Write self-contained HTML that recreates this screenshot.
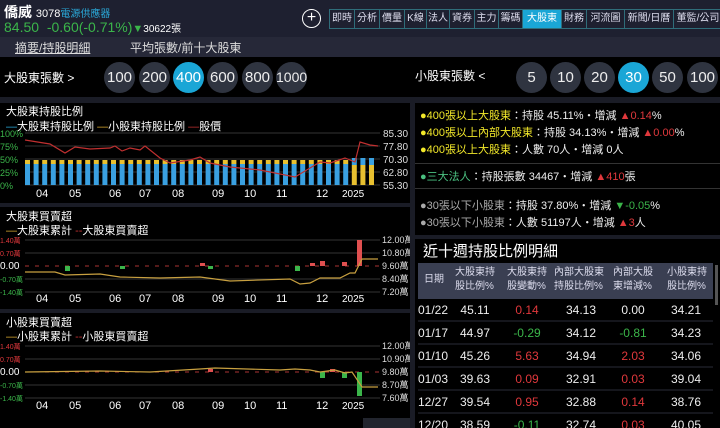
<!DOCTYPE html><html><head><meta charset="utf-8"><style>
*{margin:0;padding:0;box-sizing:border-box}
body{width:720px;height:428px;overflow:hidden;background:#000;font-family:"Liberation Sans","Noto Sans CJK TC",sans-serif;color:#fff;position:relative}
.a{position:absolute;white-space:nowrap}
.tab{position:absolute;top:9px;height:20px;border:1px solid #2f6d7a;font-size:10px;line-height:18px;text-align:center;color:#dde;background:#1e2030}
.c{position:absolute;width:31px;height:31px;border-radius:50%;background:#2f3440;font-size:15px;line-height:31px;text-align:center;color:#eee;top:62px}
.on{background:#1aa6d6;color:#fff}
.info{font-size:11px;color:#eee}
.y{color:#f2e82a}.r{color:#e0383c}.g{color:#3bb54a}.gr{color:#aaa}
</style></head><body>
<div class="a" style="left:0;top:0;width:720px;height:37px;background:#1e2030"></div>
<div class="a" style="left:4px;top:2px;font-size:14px;font-weight:bold">僑威 <span style="font-size:11px;font-weight:normal">3078</span><span style="font-size:10px;color:#2aa8d8;font-weight:normal">電源供應器</span></div>
<div class="a" style="left:4px;top:19px;font-size:14px;color:#3bb54a">84.50&nbsp; -0.60(-0.71%)<span style="font-size:11px">▼</span><span style="color:#fff;font-size:10px">30622張</span></div>
<div class="a" style="left:302px;top:9px;width:19px;height:19px;border:1.5px solid #fff;border-radius:50%;text-align:center;line-height:15px;font-size:16px">+</div>
<div class="tab" style="left:329px;width:26px">即時</div><div class="tab" style="left:354px;width:26px">分析</div><div class="tab" style="left:379px;width:26px">價量</div><div class="tab" style="left:404px;width:23px">K線</div><div class="tab" style="left:426px;width:24px">法人</div><div class="tab" style="left:449px;width:26px">資券</div><div class="tab" style="left:474px;width:25px">主力</div><div class="tab" style="left:498px;width:25px">籌碼</div><div class="tab" style="left:522px;width:40px;background:#1aa6d6;color:#fff">大股東</div><div class="tab" style="left:561px;width:26px">財務</div><div class="tab" style="left:586px;width:39px">河流圖</div><div class="tab" style="left:624px;width:50px">新聞/日曆</div><div class="tab" style="left:673px;width:50px">董監/公司</div>
<div class="a" style="left:0;top:37px;width:720px;height:20px;background:#262838"></div>
<div class="a" style="left:15px;top:39px;font-size:12px;color:#ddd;text-decoration:underline">摘要/持股明細</div>
<div class="a" style="left:130px;top:39px;font-size:12px;color:#ddd">平均張數/前十大股東</div>
<div class="a" style="left:4px;top:69px;font-size:12px">大股東張數 &gt;</div>
<div class="c" style="left:104px">100</div><div class="c" style="left:139px">200</div><div class="c on" style="left:173px">400</div><div class="c" style="left:207px">600</div><div class="c" style="left:242px">800</div><div class="c" style="left:276px;font-size:14px">1000</div>
<div class="a" style="left:415px;top:67px;font-size:12px">小股東張數 &lt;</div>
<div class="c" style="left:516px">5</div><div class="c" style="left:550px">10</div><div class="c" style="left:584px">20</div><div class="c on" style="left:618px">30</div><div class="c" style="left:652px">50</div><div class="c" style="left:687px">100</div>
<div class="a" style="left:0;top:97px;width:720px;height:6px;background:#1a1c26"></div>
<div class="a" style="left:410px;top:103px;width:5px;height:325px;background:#1a1c26"></div>
<div class="a" style="left:0;top:203px;width:410px;height:4px;background:#1a1c26"></div>
<div class="a" style="left:0;top:309px;width:410px;height:4px;background:#1a1c26"></div>
<div class="a" style="left:415px;top:235px;width:305px;height:4px;background:#1a1c26"></div>
<svg class="a" style="left:0;top:103px" width="410" height="325" font-family="Liberation Sans,Noto Sans CJK TC,sans-serif">
<text x="6" y="12" font-size="11" fill="#fff">大股東持股比例</text>
<text x="6" y="27" font-size="11" fill="#fff"><tspan fill="#2aa8d8">—</tspan>大股東持股比例 <tspan fill="#d8a830">—</tspan>小股東持股比例 <tspan fill="#c03030">—</tspan>股價</text>
<g stroke="#333" stroke-width="1"><line x1="25" y1="30" x2="380" y2="30"/><line x1="25" y1="43" x2="380" y2="43"/><line x1="25" y1="56" x2="380" y2="56"/><line x1="25" y1="69" x2="380" y2="69"/><line x1="25" y1="82" x2="380" y2="82"/></g>
<g font-size="9" fill="#3bb54a"><text x="0" y="34">100%</text><text x="0" y="47">75%</text><text x="0" y="60">50%</text><text x="0" y="73">25%</text><text x="0" y="86">0%</text></g>
<g font-size="10" fill="#ddd"><text x="383" y="34">85.30</text><text x="383" y="47">77.80</text><text x="383" y="60">70.30</text><text x="383" y="73">62.80</text><text x="383" y="86">55.30</text></g>
<g id="bars"></g>
<polyline fill="none" stroke="#c03030" stroke-width="1.2" points="25,37 50,41 65,50 75,44 90,46 110,45 115,43 122,48 130,45 140,47 145,43 160,55 170,60 190,57 200,54 210,60 230,64 260,67 295,74 310,65 320,59 330,60 345,55 355,59 360,39 370,42 378,43"/>
<g font-size="11" fill="#fff"><text x="36" y="94">04</text><text x="69" y="94">05</text><text x="109" y="94">06</text><text x="139" y="94">07</text><text x="172" y="94">08</text><text x="212" y="94">09</text><text x="244" y="94">10</text><text x="276" y="94">11</text><text x="316" y="94">12</text><text x="342" y="94" font-size="10">2025</text></g>

<text x="6" y="117" font-size="11" fill="#fff">大股東買賣超</text>
<text x="6" y="131" font-size="11" fill="#fff"><tspan fill="#d8a830">—</tspan>大股東累計 <tspan fill="#c03030">--</tspan>大股東買賣超</text>
<g stroke="#333"><line x1="25" y1="137" x2="380" y2="137"/><line x1="25" y1="150" x2="380" y2="150"/><line x1="25" y1="163" x2="380" y2="163" stroke-dasharray="4,6" stroke="#a33"/><line x1="25" y1="176" x2="380" y2="176"/><line x1="25" y1="189" x2="380" y2="189"/></g>
<g font-size="7"><text x="0" y="140" fill="#e0383c">1.40萬</text><text x="0" y="153" fill="#e0383c">0.70萬</text><text x="0" y="166" fill="#fff" font-size="10">0.00</text><text x="0" y="179" fill="#3bb54a">-0.70萬</text><text x="0" y="192" fill="#3bb54a">-1.40萬</text></g>
<g font-size="9" fill="#ddd"><text x="382" y="140">12.00萬</text><text x="382" y="153">10.80萬</text><text x="382" y="166">9.60萬</text><text x="382" y="179">8.40萬</text><text x="382" y="192">7.20萬</text></g>
<g fill="#3bb54a"><rect x="65" y="163" width="5" height="5"/><rect x="120" y="163" width="5" height="3"/><rect x="208" y="163" width="5" height="3"/><rect x="295" y="163" width="5" height="5"/></g>
<g fill="#e05050"><rect x="200" y="160" width="5" height="3"/><rect x="310" y="160" width="5" height="3"/><rect x="320" y="158" width="5" height="5"/><rect x="342" y="159" width="5" height="4"/><rect x="357" y="137" width="5" height="26"/></g>
<polyline fill="none" stroke="#c8a040" stroke-width="1.2" points="25,169 55,169 65,172 100,171 120,174 160,175 200,174 230,178 290,176 300,181 310,180 320,175 340,175 350,170 355,170 362,156 378,156"/>
<g font-size="11" fill="#fff"><text x="36" y="199">04</text><text x="69" y="199">05</text><text x="109" y="199">06</text><text x="139" y="199">07</text><text x="172" y="199">08</text><text x="212" y="199">09</text><text x="244" y="199">10</text><text x="276" y="199">11</text><text x="316" y="199">12</text><text x="342" y="199" font-size="10">2025</text></g>

<text x="6" y="223" font-size="11" fill="#fff">小股東買賣超</text>
<text x="6" y="237" font-size="11" fill="#fff"><tspan fill="#d8a830">—</tspan>小股東累計 <tspan fill="#c03030">--</tspan>小股東買賣超</text>
<g stroke="#333"><line x1="25" y1="243" x2="380" y2="243"/><line x1="25" y1="256" x2="380" y2="256"/><line x1="25" y1="269" x2="380" y2="269" stroke-dasharray="4,6" stroke="#a33"/><line x1="25" y1="282" x2="380" y2="282"/><line x1="25" y1="295" x2="380" y2="295"/></g>
<g font-size="7"><text x="0" y="246" fill="#e0383c">1.40萬</text><text x="0" y="259" fill="#e0383c">0.70萬</text><text x="0" y="272" fill="#fff" font-size="10">0.00</text><text x="0" y="285" fill="#3bb54a">-0.70萬</text><text x="0" y="298" fill="#3bb54a">-1.40萬</text></g>
<g font-size="9" fill="#ddd"><text x="382" y="246">12.00萬</text><text x="382" y="259">10.90萬</text><text x="382" y="272">9.80萬</text><text x="382" y="285">8.70萬</text><text x="382" y="298">7.60萬</text></g>
<g fill="#3bb54a"><rect x="320" y="269" width="5" height="6"/><rect x="342" y="269" width="5" height="6"/><rect x="357" y="269" width="5" height="24"/></g>
<g fill="#e05050"><rect x="208" y="266" width="5" height="3"/><rect x="330" y="266" width="5" height="3"/></g>
<polyline fill="none" stroke="#c8a040" stroke-width="1.2" points="25,269 100,268 150,269 200,266 215,265 280,267 295,266 310,267 320,269 335,267 345,270 352,269 362,284 378,284"/>
<g font-size="11" fill="#fff"><text x="36" y="306">04</text><text x="69" y="306">05</text><text x="109" y="306">06</text><text x="139" y="306">07</text><text x="172" y="306">08</text><text x="212" y="306">09</text><text x="244" y="306">10</text><text x="276" y="306">11</text><text x="316" y="306">12</text><text x="342" y="306" font-size="10">2025</text></g>
<rect x="363" y="315" width="47" height="10" fill="#22252e"/>
</svg>
<div class="a info" style="left:420px;top:108px;line-height:17px">
<div><span class="y">●400張以上大股東</span>：持股 45.11%・增減 <span class="r">▲0.14</span>%</div>
<div><span class="y">●400張以上內部大股東</span>：持股 34.13%・增減 <span class="r">▲0.00</span>%</div>
<div><span class="y">●400張以上大股東</span>：人數 70人・增減 0人</div>
</div>
<div class="a" style="left:415px;top:163px;width:305px;height:1px;background:#333"></div>
<div class="a info" style="left:420px;top:168px"><span style="color:#4ac080">●三大法人</span>：持股張數 34467・增減 <span class="r">▲410</span>張</div>
<div class="a" style="left:415px;top:188px;width:305px;height:1px;background:#333"></div>
<div class="a info" style="left:420px;top:198px;line-height:17px">
<div><span class="gr">●30張以下小股東</span>：持股 37.80%・增減 <span class="g">▼-0.05</span>%</div>
<div><span class="gr">●30張以下小股東</span>：人數 51197人・增減 <span class="r">▲3</span>人</div>
</div>
<div class="a" style="left:423px;top:240px;font-size:15px">近十週持股比例明細</div>
<div class="a" style="left:418px;top:263px;width:295px;height:36px;background:#3a3f52"></div>
<div class="a" style="left:715px;top:265px;width:3px;height:40px;background:#555"></div>
<div class="a" style="left:418px;top:265px;font-size:10px;color:#dde;line-height:14px">
<div class="a" style="left:6px;top:8px">日期</div>
<div class="a" style="left:37px;top:1px">大股東持<br>股比例%</div>
<div class="a" style="left:89px;top:1px">大股東持<br>股變動%</div>
<div class="a" style="left:136px;top:1px">內部大股東<br>持股比例%</div>
<div class="a" style="left:195px;top:1px">內部大股<br>東增減%</div>
<div class="a" style="left:249px;top:1px">小股東持<br>股比例%</div>
</div>
<svg class="a" style="left:418px;top:298px" width="295" height="130" font-family="Liberation Sans,sans-serif" font-size="12">
<g stroke="#2a2d38"><line x1="0" y1="23" x2="295" y2="23"/><line x1="0" y1="46" x2="295" y2="46"/><line x1="0" y1="69" x2="295" y2="69"/><line x1="0" y1="92" x2="295" y2="92"/><line x1="0" y1="115" x2="295" y2="115"/></g>
<g fill="#eee" text-anchor="middle">
<text x="15" y="16">01/22</text><text x="57" y="16">45.11</text><text x="109" y="16" fill="#e0383c">0.14</text><text x="163" y="16">34.13</text><text x="215" y="16">0.00</text><text x="268" y="16">34.21</text>
<text x="15" y="39">01/17</text><text x="57" y="39">44.97</text><text x="109" y="39" fill="#3bb54a">-0.29</text><text x="163" y="39">34.12</text><text x="215" y="39" fill="#3bb54a">-0.81</text><text x="268" y="39">34.23</text>
<text x="15" y="62">01/10</text><text x="57" y="62">45.26</text><text x="109" y="62" fill="#e0383c">5.63</text><text x="163" y="62">34.94</text><text x="215" y="62" fill="#e0383c">2.03</text><text x="268" y="62">34.06</text>
<text x="15" y="85">01/03</text><text x="57" y="85">39.63</text><text x="109" y="85" fill="#e0383c">0.09</text><text x="163" y="85">32.91</text><text x="215" y="85" fill="#e0383c">0.03</text><text x="268" y="85">39.04</text>
<text x="15" y="108">12/27</text><text x="57" y="108">39.54</text><text x="109" y="108" fill="#e0383c">0.95</text><text x="163" y="108">32.88</text><text x="215" y="108" fill="#e0383c">0.14</text><text x="268" y="108">38.76</text>
<text x="15" y="131">12/20</text><text x="57" y="131">38.59</text><text x="109" y="131" fill="#3bb54a">-0.11</text><text x="163" y="131">32.74</text><text x="215" y="131" fill="#e0383c">0.03</text><text x="268" y="131">40.05</text>
</g></svg>
<script>
var g=document.getElementById('bars'),s='';
for(var i=0;i<41;i++){var x=25+i*8.6;
if(i<38){s+='<rect x="'+x+'" y="57" width="5" height="4" fill="#e8c030"/><rect x="'+x+'" y="61" width="5" height="21" fill="#3aa0e0"/>';}
else{s+='<rect x="'+x+'" y="55" width="5" height="7" fill="#3aa0e0"/><rect x="'+x+'" y="62" width="5" height="20" fill="#e8c030"/>';}}
g.innerHTML=s;
</script>
</body></html>
